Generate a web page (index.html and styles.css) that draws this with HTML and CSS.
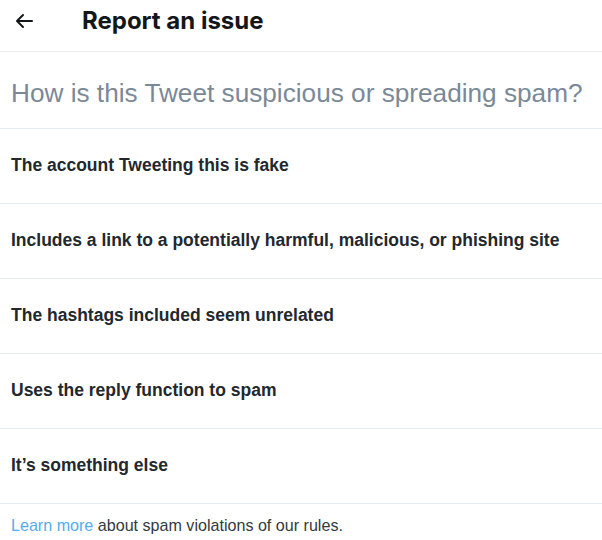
FILE: index.html
```html
<!DOCTYPE html>
<html>
<head>
<meta charset="utf-8">
<link rel="stylesheet" href="styles.css">
</head>
<body>
<div class="page">
  <header class="header">
    <button class="back" aria-label="Back">
      <svg viewBox="0 0 24 24" width="24" height="24"><path d="M20 11H7.414l4.293-4.293a1 1 0 0 0-1.414-1.414l-6 6a1 1 0 0 0 0 1.414l6 6a.996.996 0 0 0 1.414 0 1 1 0 0 0 0-1.414L7.414 13H20a1 1 0 1 0 0-2z" fill="#14171a"/></svg>
    </button>
    <h1 class="title">Report an issue</h1>
  </header>
  <div class="question">How is this Tweet suspicious or spreading spam?</div>
  <ul class="options">
    <li class="option">The account Tweeting this is fake</li>
    <li class="option">Includes a link to a potentially harmful, malicious, or phishing site</li>
    <li class="option">The hashtags included seem unrelated</li>
    <li class="option">Uses the reply function to spam</li>
    <li class="option">It’s something else</li>
  </ul>
  <p class="footer"><a class="link" href="#">Learn more</a> about spam violations of our rules.</p>
</div>
</body>
</html>
```
FILE: styles.css
```css
html, body {
  margin: 0;
  padding: 0;
  background: #ffffff;
}
.page {
  width: 602px;
  font-family: "Liberation Sans", Arial, sans-serif;
  color: #14171a;
}
.header {
  display: flex;
  align-items: center;
  border-bottom: 1px solid #eceff1;
  padding-bottom: 10px;
  box-sizing: border-box;
  height: 52px;
}
.back {
  border: 0;
  background: none;
  padding: 0;
  margin: 0 0 0 12px;
  width: 24px;
  height: 24px;
  display: flex;
  align-items: center;
  justify-content: center;
}
.title {
  margin: 0 0 0 46px;
  font-family: "Inter", "Roboto", sans-serif;
  font-weight: 700;
  font-size: 24px;
  letter-spacing: 0;
  color: #14171a;
  line-height: 1;
}
.question {
  height: 77px;
  box-sizing: border-box;
  padding: 6px 11px 0;
  display: flex;
  align-items: center;
  font-size: 26.2px;
  color: #7b8997;
  border-bottom: 1px solid #e6ecf0;
}
.options {
  list-style: none;
  margin: 0;
  padding: 0;
}
.option {
  box-sizing: content-box;
  display: flex;
  align-items: center;
  padding: 0 12px 2px 11px;
  height: 72px;
  font-size: 17.5px;
  font-weight: 700;
  color: #22282d;
  border-bottom: 1px solid #e6ecf0;
}
.footer {
  margin: 0;
  padding: 11px 11px 0;
  font-size: 16.1px;
  color: #333a40;
  line-height: 20px;
}
.link {
  color: #55acee;
  text-decoration: none;
}
```
